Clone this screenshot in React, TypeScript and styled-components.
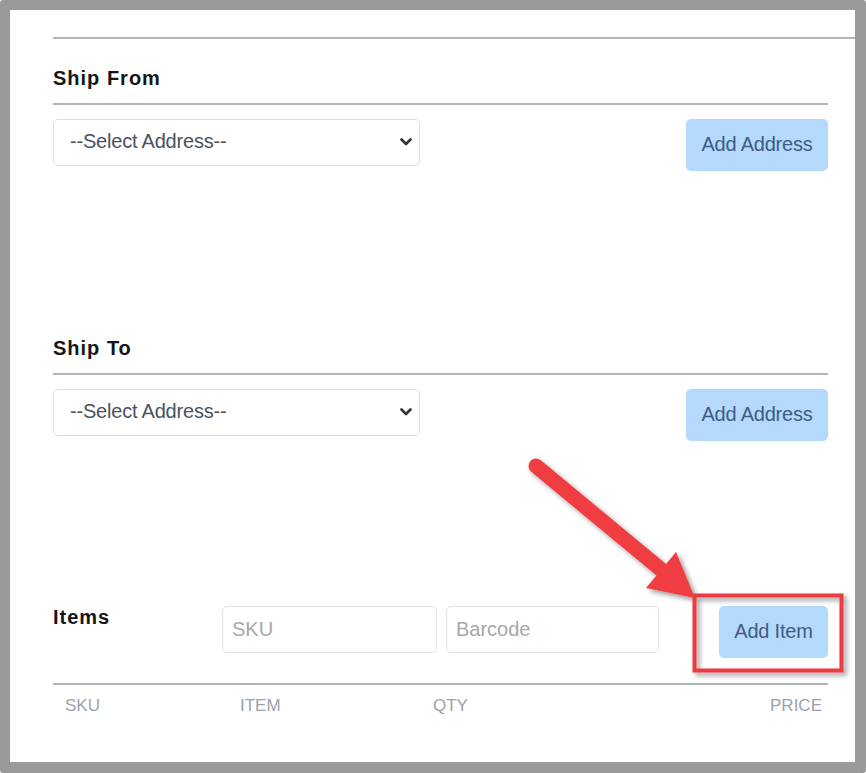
import React from 'react';
import styled, { createGlobalStyle } from 'styled-components';

const GlobalStyle = createGlobalStyle`
  html, body {
    margin: 0;
    padding: 0;
    background: #ffffff;
  }
  * {
    box-sizing: border-box;
  }
`;

const Page = styled.div`
  position: relative;
  width: 866px;
  height: 773px;
  font-family: 'Liberation Sans', Arial, sans-serif;
`;

const Frame = styled.div`
  width: 866px;
  height: 773px;
  border-style: solid;
  border-color: #9a9a9a;
  border-width: 10px 11px 11px 10px;
  border-radius: 3px;
  background: #ffffff;
  padding-left: 43px;
  display: flex;
  flex-direction: column;
`;

const Rule = styled.div<{ $top: number }>`
  height: 2px;
  margin-top: ${(p) => p.$top}px;
  background: #b1b4b8;
`;

const Body = styled.div`
  padding-right: 27px;
  display: flex;
  flex-direction: column;
`;

const Heading = styled.h2<{ $top: number }>`
  margin: ${(p) => p.$top}px 0 0;
  font-size: 20px;
  line-height: 24px;
  font-weight: 700;
  letter-spacing: 1px;
  color: #161616;
`;

const FieldRow = styled.div`
  margin-top: 14px;
  display: flex;
  justify-content: space-between;
  align-items: flex-start;
`;

const SelectWrap = styled.div`
  position: relative;
  width: 367px;
  height: 47px;
`;

const Select = styled.select`
  appearance: none;
  width: 100%;
  height: 100%;
  padding: 0 36px 3px 16px;
  border: 1px solid #dcdfe3;
  border-radius: 5px;
  background: #ffffff;
  font-family: inherit;
  font-size: 20px;
  letter-spacing: -0.2px;
  color: #4b5360;
  outline: none;
`;

const Chevron = styled.svg`
  position: absolute;
  right: 8px;
  top: 19px;
  pointer-events: none;
`;

const Button = styled.button<{ $width: number }>`
  width: ${(p) => p.$width}px;
  height: 52px;
  border: none;
  border-radius: 5px;
  background: #b4d9fd;
  color: #3e5c83;
  font-family: inherit;
  font-size: 20px;
  letter-spacing: -0.2px;
  padding: 0 0 2px;
  cursor: pointer;
`;

const ItemsRow = styled.div`
  margin-top: 165px;
  display: flex;
  align-items: flex-start;
`;

const ItemsTitle = styled(Heading)`
  width: 169px;
  flex-shrink: 0;
`;

const TextInput = styled.input<{ $width: number; $gap?: number }>`
  width: ${(p) => p.$width}px;
  height: 47px;
  margin-left: ${(p) => p.$gap ?? 0}px;
  padding: 0 9px 0 9px;
  border: 1px solid #e1e3e6;
  border-radius: 5px;
  font-family: inherit;
  font-size: 20px;
  color: #333;
  outline: none;
  &::placeholder {
    color: #a5a8ad;
  }
`;

const Spacer = styled.div`
  flex: 1;
`;

const TableHead = styled.div`
  margin-top: 11px;
  padding: 0 6px 0 12px;
  display: grid;
  grid-template-columns: 175px 193px 1fr auto;
  font-size: 17px;
  line-height: 20px;
  color: #9ba2ac;
  text-transform: uppercase;
`;

const Overlay = styled.svg`
  position: absolute;
  left: 0;
  top: 0;
  pointer-events: none;
`;

function AddressSelect() {
  return (
    <SelectWrap>
      <Select defaultValue="">
        <option value="">--Select Address--</option>
      </Select>
      <Chevron width="12" height="8" viewBox="0 0 12 8">
        <path d="M1.5 1.5 L6 6 L10.5 1.5" fill="none" stroke="#333" strokeWidth="2.6" strokeLinecap="round" strokeLinejoin="round" />
      </Chevron>
    </SelectWrap>
  );
}

export default function App() {
  return (
    <>
      <GlobalStyle />
      <Page>
        <Frame>
          <Rule $top={27} />
          <Body>
            <Heading $top={27}>Ship From</Heading>
            <Rule $top={13} />
            <FieldRow>
              <AddressSelect />
              <Button $width={142}>Add Address</Button>
            </FieldRow>

            <Heading $top={165}>Ship To</Heading>
            <Rule $top={13} />
            <FieldRow>
              <AddressSelect />
              <Button $width={142}>Add Address</Button>
            </FieldRow>

            <ItemsRow>
              <ItemsTitle $top={-1}>Items</ItemsTitle>
              <TextInput $width={215} placeholder="SKU" />
              <TextInput $width={213} $gap={9} placeholder="Barcode" />
              <Spacer />
              <Button $width={109}>Add Item</Button>
            </ItemsRow>
            <Rule $top={25} />
            <TableHead>
              <span>SKU</span>
              <span>Item</span>
              <span>Qty</span>
              <span>Price</span>
            </TableHead>
          </Body>
        </Frame>

        <Overlay width="866" height="773" viewBox="0 0 866 773">
          <defs>
            <filter id="shadow" x="-20%" y="-20%" width="140%" height="140%">
              <feDropShadow dx="3" dy="3" stdDeviation="2.5" floodColor="#000" floodOpacity="0.4" />
            </filter>
          </defs>
          <g filter="url(#shadow)">
            <line x1="536" y1="466" x2="664" y2="572" stroke="#ef3d42" strokeWidth="15" strokeLinecap="round" />
            <polygon points="646,588 676,552 695,598" fill="#ef3d42" />
            <rect x="694.5" y="595.5" width="147" height="75" fill="none" stroke="#ec3a3f" strokeWidth="4" />
          </g>
        </Overlay>
      </Page>
    </>
  );
}
